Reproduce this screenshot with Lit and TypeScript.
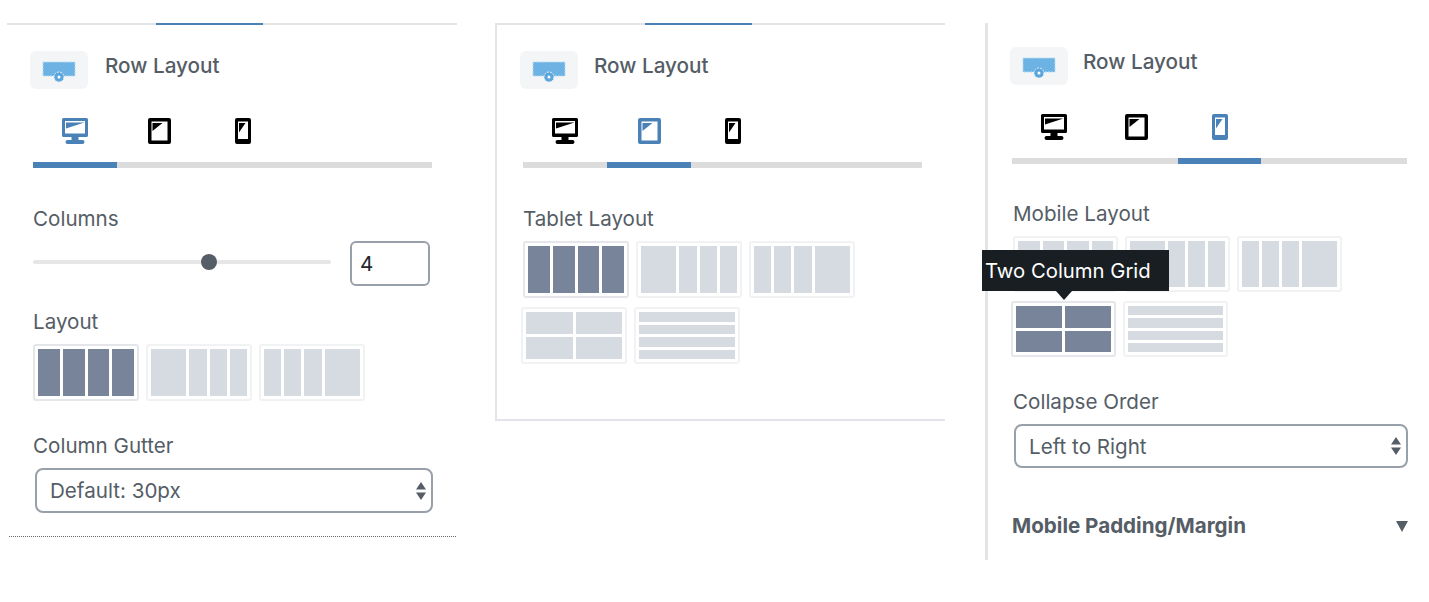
import { LitElement, html, css, svg } from 'lit';
import { customElement } from 'lit/decorators.js';

type Device = 'desktop' | 'tablet' | 'mobile';
type Pattern = 'equal' | 'left' | 'right' | 'grid' | 'rows';

const deviceIcons = {
  desktop: svg`<path fill-rule="evenodd" d="M1.500 0h23A1.500 1.500 0 0 1 26 1.500v16a1.500 1.500 0 0 1-1.500 1.500H16.500v3h4a2 2 0 0 1 0 4h-15a2 2 0 0 1 0-4h4v-3H1.500A1.500 1.500 0 0 1 0 17.500v-16A1.500 1.500 0 0 1 1.500 0zM3 3v12.500h20V3z"/><path d="M4 4.500h18.500L4 10.500z"/>`,
  tablet: svg`<path fill-rule="evenodd" d="M2 0h19a2 2 0 0 1 2 2v22a2 2 0 0 1-2 2H2a2 2 0 0 1-2-2V2a2 2 0 0 1 2-2zM3.500 3.500v19h16v-19z"/><path d="M4.500 5h10L4.500 13z"/>`,
  mobile: svg`<path fill-rule="evenodd" d="M2 0h12a2 2 0 0 1 2 2v22a2 2 0 0 1-2 2H2a2 2 0 0 1-2-2V2a2 2 0 0 1 2-2zM3 3.500V21h10V3.500z"/><path d="M4 5h6.500L4 14.500z"/>`,
};

@customElement('app-root')
export class AppRoot extends LitElement {
  static styles = css`
    :host {
      display: block;
      height: 602px;
      background: #fff;
      overflow: hidden;
      font-family: Inter, "Liberation Sans", sans-serif;
      color: #555d66;
    }
    .page {
      display: flex;
      align-items: flex-start;
      padding-top: 23px;
      padding-left: 7px;
    }
    .panel {
      box-sizing: border-box;
      width: 450px;
      flex: none;
      padding-left: 26px;
      position: relative;
    }
    .panel-tablet {
      margin-left: 38px;
      height: 398px;
      border-left: 2px solid #e2e4e7;
      border-bottom: 2px solid #e2e4e7;
    }
    .panel-mobile {
      margin-left: 40px;
      width: 430px;
      height: 537px;
      padding-left: 24px;
      border-left: 3px solid #e2e4e7;
    }
    .topline {
      display: flex;
      height: 2px;
      margin-left: -26px;
      background: #e2e4e7;
    }
    .topline i {
      display: block;
      width: 107px;
      margin-left: 149px;
      background: #4a82b8;
    }
    .panel-tablet .topline i {
      margin-left: 148px;
    }
    .header {
      display: flex;
      margin-top: 26px;
      margin-left: -3px;
      gap: 17px;
    }
    .panel-tablet .header {
      gap: 16px;
    }
    .panel-mobile .topline {
      visibility: hidden;
    }
    .panel-mobile .header {
      margin-top: 22px;
      margin-left: -2px;
      gap: 15px;
    }
    .type-icon {
      width: 58px;
      height: 38px;
      flex: none;
      display: flex;
      align-items: center;
      justify-content: center;
      border-radius: 6px;
      background: #f4f5f6;
    }
    .title {
      padding-top: 3px;
      font-size: 20.700px;
      line-height: 24px;
      font-weight: 500;
      color: #555d66;
    }
    .tabs {
      display: flex;
      width: 399px;
      margin-top: 29px;
      border-bottom: 6px solid #dcdcdc;
    }
    .panel-mobile .tabs {
      width: 395px;
    }
    .tab {
      box-sizing: border-box;
      width: 84px;
      height: 50px;
      margin-bottom: -6px;
      padding-bottom: 24px;
      display: flex;
      align-items: flex-start;
      justify-content: center;
      color: #000;
    }
    .panel-mobile .tab {
      width: 83px;
    }
    .tab.active {
      color: #4a82b8;
      border-bottom: 6px solid #4a82b8;
    }
    .label {
      font-size: 20.600px;
      line-height: 24px;
      color: #555d66;
    }
    .columns-label {
      margin-top: 39px;
    }
    .layout-label {
      margin-top: 39px;
    }
    .panel-mobile .label {
      margin-left: 1px;
    }
    .panel-mobile .layout-label {
      margin-top: 38px;
    }
    .slider-row {
      display: flex;
      align-items: center;
      margin-top: 10px;
    }
    .track {
      width: 298px;
      height: 4px;
      flex: none;
      border-radius: 2px;
      background: #e6e6e6;
      position: relative;
      margin-top: -3px;
    }
    .thumb {
      position: absolute;
      left: 168px;
      top: -6px;
      width: 16px;
      height: 16px;
      border-radius: 50%;
      background: #555d66;
    }
    .number {
      box-sizing: border-box;
      width: 80px;
      height: 45px;
      margin-left: 19px;
      padding-left: 8px;
      display: flex;
      align-items: center;
      border: 2px solid #98a0a9;
      border-radius: 6px;
      font-size: 20.600px;
      color: #23282d;
    }
    .slider-row + .label {
      margin-top: 24px;
    }
    .options {
      display: flex;
      flex-direction: column;
      gap: 9px;
      margin-top: 10px;
    }
    .panel-mobile .options {
      margin-left: 1px;
    }
    .options-row {
      display: flex;
      gap: 7px;
    }
    .options-row.second {
      margin-left: -2px;
    }
    .option {
      box-sizing: border-box;
      width: 106px;
      height: 57px;
      padding: 3px;
      display: grid;
      gap: 3px;
      background: #fff;
      border: 2px solid #f1f2f3;
      border-radius: 3px;
      flex: none;
      --cell: #d6dae1;
    }
    .panel-mobile .option {
      width: 105px;
      height: 56px;
    }
    .option.selected {
      --cell: #78849a;
      border-color: #e4e6e9;
    }
    .option span {
      background: var(--cell);
    }
    .equal {
      grid-template-columns: repeat(4, 1fr);
    }
    .left {
      grid-template-columns: 35fr 17fr 17fr 17fr;
    }
    .right {
      grid-template-columns: 17fr 17fr 17fr 35fr;
    }
    .grid {
      grid-template-columns: 1fr 1fr;
      grid-template-rows: 1fr 1fr;
    }
    .rows {
      grid-template-rows: repeat(4, 1fr);
    }
    .select {
      box-sizing: border-box;
      width: 398px;
      height: 45px;
      margin-top: 10px;
      margin-left: 2px;
      padding: 0 5px 0 13px;
      display: flex;
      align-items: center;
      justify-content: space-between;
      border: 2px solid #98a0a9;
      border-radius: 8px;
      font-size: 20.600px;
      color: #555d66;
    }
    .panel-mobile .select {
      width: 394px;
      height: 44px;
    }
    .gutter-label {
      margin-top: 33px;
    }
    .panel-mobile .collapse-label {
      margin-top: 33px;
    }
    .dots {
      width: 447px;
      margin-top: 23px;
      margin-left: -24px;
      border-top: 1px dotted #666;
    }
    .section-head {
      display: flex;
      align-items: center;
      justify-content: space-between;
      width: 396px;
      margin-top: 46px;
      font-size: 20.600px;
      line-height: 24px;
      font-weight: 700;
      color: #555d66;
    }
    .tooltip {
      position: absolute;
      left: -6px;
      top: 227px;
      height: 41px;
      width: 187px;
      box-sizing: border-box;
      padding-left: 3px;
      display: flex;
      align-items: center;
      background: #191e23;
      color: #fff;
      font-size: 20.300px;
      white-space: nowrap;
    }
    .tooltip::after {
      content: "";
      position: absolute;
      left: 74px;
      top: 41px;
      border: 8px solid transparent;
      border-bottom: 0;
      border-top: 9px solid #191e23;
    }
  `;

  private typeIcon() {
    return html`<div class="type-icon">
      <svg width="34" height="26" viewBox="0 0 34 26">
        <rect x="1" y="5" width="32" height="14" fill="#6cb3e3" stroke="#b5dcf3" stroke-dasharray="2 1"></rect>
        <circle cx="17" cy="20" r="5" fill="#5ba6dc" stroke="#e3f1fa" stroke-dasharray="2 1"></circle>
        <circle cx="17" cy="20" r="1.500" fill="#fff"></circle>
      </svg>
    </div>`;
  }

  private tabs(active: Device) {
    const list: [Device, number][] = [['desktop', 26], ['tablet', 23], ['mobile', 16]];
    return html`<div class="tabs">
      ${list.map(([name, w]) => html`<div class="tab ${name === active ? 'active' : ''}">
        <svg width=${w} height="26" viewBox="0 0 ${w} 26" fill="currentColor">${deviceIcons[name]}</svg>
      </div>`)}
    </div>`;
  }

  private option(kind: Pattern, selected = false) {
    return html`<div class="option ${kind} ${selected ? 'selected' : ''}">
      ${Array.from({ length: 4 }, () => html`<span></span>`)}
    </div>`;
  }

  private header() {
    return html`<div class="topline"><i></i></div>
      <div class="header">${this.typeIcon()}<div class="title">Row Layout</div></div>`;
  }

  private arrows() {
    return html`<svg width="10" height="18" viewBox="0 0 10 18" fill="#555d66">
      <path d="M5 0l5 7.500H0zM0 10.500h10L5 18z"></path>
    </svg>`;
  }

  render() {
    return html`<div class="page">
      <section class="panel panel-desktop">
        ${this.header()}
        ${this.tabs('desktop')}
        <div class="label columns-label">Columns</div>
        <div class="slider-row">
          <div class="track"><div class="thumb"></div></div>
          <div class="number">4</div>
        </div>
        <div class="label">Layout</div>
        <div class="options">
          <div class="options-row">
            ${this.option('equal', true)}${this.option('left')}${this.option('right')}
          </div>
        </div>
        <div class="label gutter-label">Column Gutter</div>
        <div class="select"><span>Default: 30px</span>${this.arrows()}</div>
        <div class="dots"></div>
      </section>

      <section class="panel panel-tablet">
        ${this.header()}
        ${this.tabs('tablet')}
        <div class="label layout-label">Tablet Layout</div>
        <div class="options">
          <div class="options-row">
            ${this.option('equal', true)}${this.option('left')}${this.option('right')}
          </div>
          <div class="options-row second">
            ${this.option('grid')}${this.option('rows')}
          </div>
        </div>
      </section>

      <section class="panel panel-mobile">
        ${this.header()}
        ${this.tabs('mobile')}
        <div class="label layout-label">Mobile Layout</div>
        <div class="options">
          <div class="options-row">
            ${this.option('equal')}${this.option('left')}${this.option('right')}
          </div>
          <div class="options-row second">
            ${this.option('grid', true)}${this.option('rows')}
          </div>
        </div>
        <div class="tooltip">Two Column Grid</div>
        <div class="label collapse-label">Collapse Order</div>
        <div class="select"><span>Left to Right</span>${this.arrows()}</div>
        <div class="section-head">
          <span>Mobile Padding/Margin</span>
          <svg width="12" height="11" viewBox="0 0 12 11" fill="#555d66"><path d="M0 0h12L6 11z"></path></svg>
        </div>
      </section>
    </div>`;
  }
}
